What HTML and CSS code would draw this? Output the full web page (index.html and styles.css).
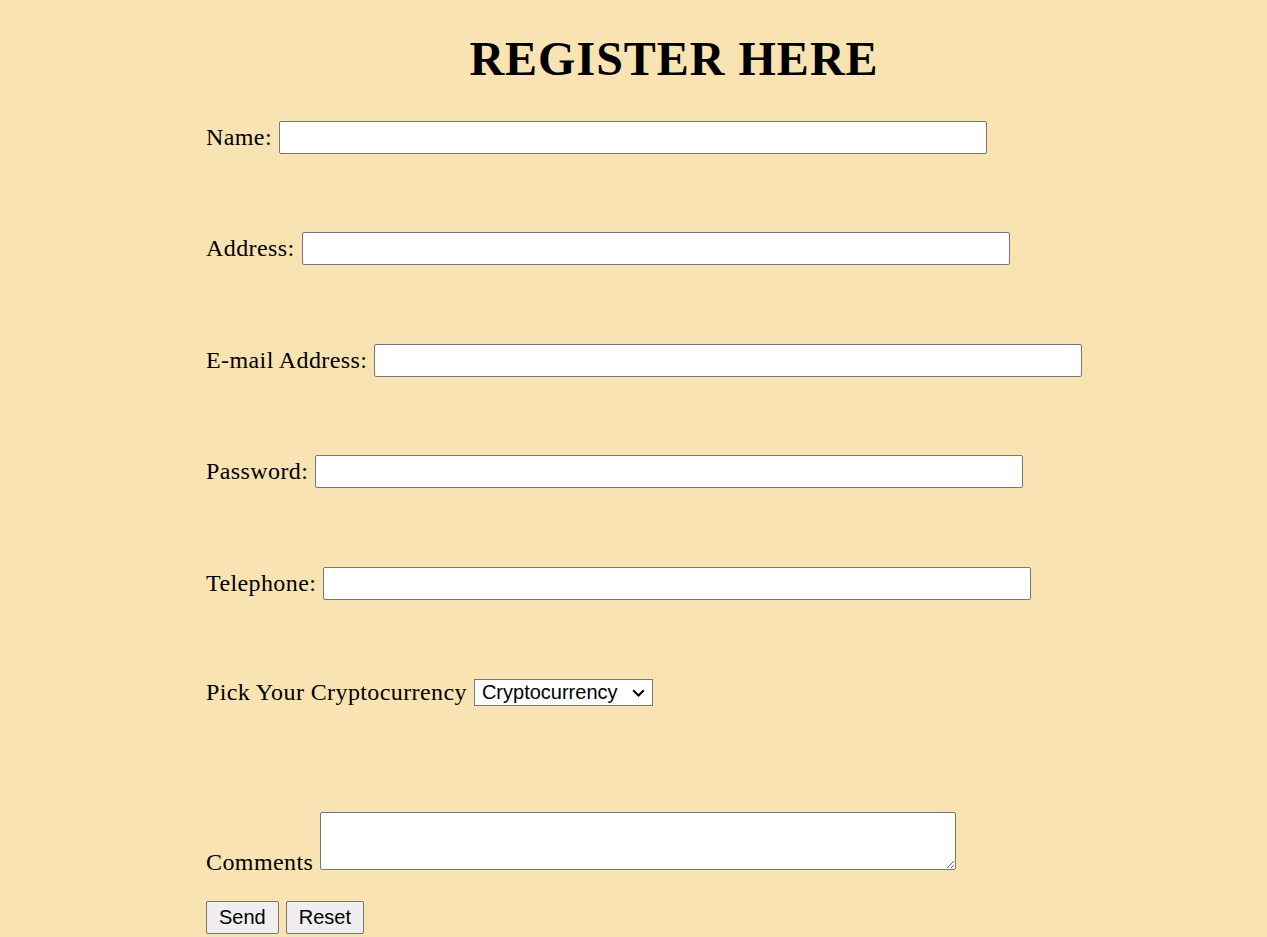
FILE: index.html
```html
<!DOCTYPE html>
<html lang="en">
<head>
<meta charset="utf-8">
<title>Register Here</title>
<link rel="stylesheet" href="styles.css">
</head>
<body>
<div class="page">
  <h1 class="title">REGISTER HERE</h1>
  <form class="form">
    <div class="field field-first">
      <label for="name">Name:</label>
      <input id="name" class="text-input" type="text">
    </div>
    <div class="field">
      <label for="address">Address:</label>
      <input id="address" class="text-input" type="text">
    </div>
    <div class="field field-wide">
      <label for="email">E-mail Address:</label>
      <input id="email" class="text-input" type="email">
    </div>
    <div class="field">
      <label for="password">Password:</label>
      <input id="password" class="text-input" type="password">
    </div>
    <div class="field field-wide">
      <label for="tel">Telephone:</label>
      <input id="tel" class="text-input" type="tel">
    </div>
    <div class="field field-select">
      <label for="crypto">Pick Your Cryptocurrency</label>
      <span class="select-wrap">
        <select id="crypto" class="select">
          <option>Cryptocurrency</option>
          <option>Bitcoin</option>
          <option>Ethereum</option>
          <option>Litecoin</option>
        </select>
        <svg class="chevron" width="13" height="8" viewBox="0 0 13 8" aria-hidden="true"><path d="M1.2 1.2 L6.5 6.5 L11.8 1.2" fill="none" stroke="#000" stroke-width="2"/></svg>
      </span>
    </div>
    <div class="comments-row">
      <label for="comments">Comments</label> <textarea id="comments" class="textarea"></textarea>
    </div>
    <div class="actions">
      <button type="submit" class="btn">Send</button>
      <button type="reset" class="btn">Reset</button>
    </div>
  </form>
</div>
</body>
</html>
```

FILE: styles.css
```css
html, body {
  margin: 0;
  padding: 0;
}

body {
  background: #fae3b2;
  color: #000;
  font-family: "Liberation Serif", "Times New Roman", serif;
  font-size: 24px;
}

.page {
  margin-left: 206px;
  width: 936px;
  padding-top: 31px;
}

.title {
  margin: 0;
  text-align: center;
  font-size: 48px;
  line-height: 55px;
  font-weight: bold;
  letter-spacing: 1px;
}

.form {
  display: flex;
  flex-direction: column;
  align-items: flex-start;
  margin-top: 35px;
}

.form label {
  letter-spacing: 0.4px;
}

.field {
  display: flex;
  align-items: center;
  gap: 7px;
  margin-top: 78px;
}

.field-first {
  margin-top: 0;
}

.field-wide {
  margin-top: 79px;
}

.field-select {
  margin-top: 79px;
  gap: 7px;
}

.text-input {
  box-sizing: border-box;
  width: 708px;
  height: 33px;
  margin: 0;
  padding: 1px 3px;
  border: 1px solid #767676;
  border-radius: 2px;
  font-family: "Liberation Sans", Arial, sans-serif;
  font-size: 20px;
  background: #fff;
}

.select-wrap {
  position: relative;
  display: inline-block;
  line-height: 0;
}

.select {
  box-sizing: border-box;
  width: 179px;
  height: 27px;
  margin: 0;
  padding: 0 0 0 7px;
  border: 1px solid #767676;
  border-radius: 0;
  appearance: none;
  -webkit-appearance: none;
  font-family: "Liberation Sans", Arial, sans-serif;
  font-size: 20px;
  line-height: 25px;
  background: #fff;
  color: #000;
}

.chevron {
  position: absolute;
  left: 158px;
  top: 10px;
  pointer-events: none;
}

.comments-row {
  margin-top: 106px;
  line-height: normal;
}

.textarea {
  box-sizing: border-box;
  width: 636px;
  height: 58px;
  margin: 0 0 0 1px;
  border: 1px solid #767676;
  border-radius: 2px;
  vertical-align: baseline;
  background: #fff;
}

.actions {
  display: flex;
  gap: 7px;
  margin-top: 25px;
}

.btn {
  box-sizing: border-box;
  height: 33px;
  margin: 0;
  padding: 0 12px;
  border: 1px solid #767676;
  border-radius: 2px;
  background: #efefef;
  font-family: "Liberation Sans", Arial, sans-serif;
  font-size: 20px;
  color: #000;
}
```
